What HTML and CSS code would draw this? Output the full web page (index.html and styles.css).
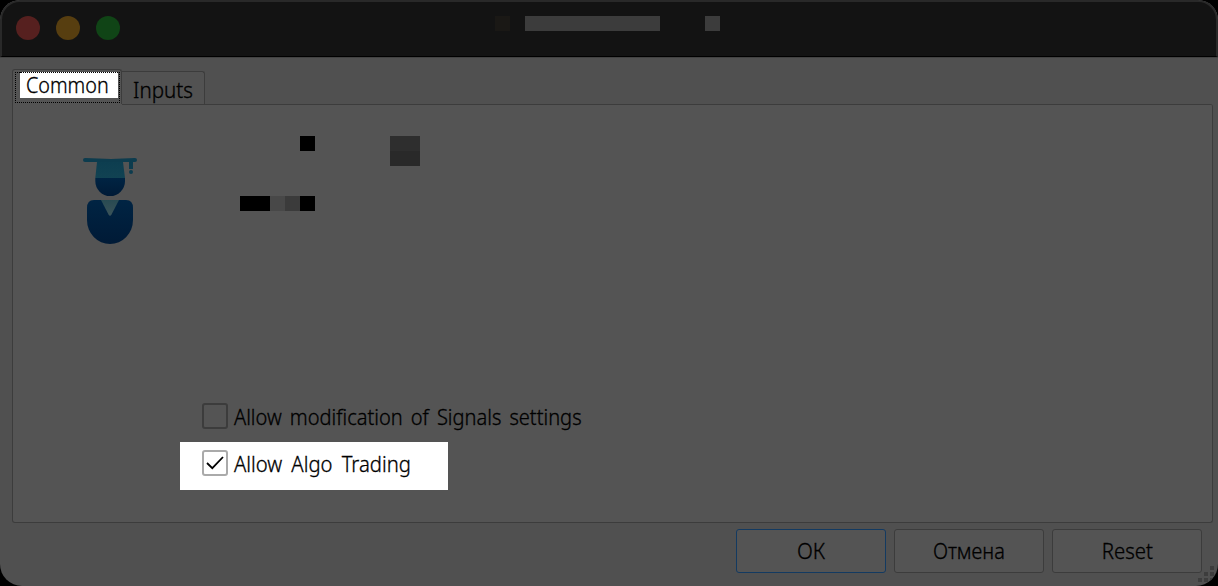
FILE: index.html
```
<!DOCTYPE html>
<html lang="en">
<head>
<meta charset="utf-8">
<title>Expert properties</title>
<link rel="stylesheet" href="styles.css">
</head>
<body>
<main class="window">
  <header class="titlebar">
    <div class="lights"><i class="light red"></i><i class="light yellow"></i><i class="light green"></i></div>
    <div class="title-mask"><i class="m1"></i><i class="m2"></i><i class="m3"></i></div>
  </header>
  <div class="content">
    <nav class="tabs">
      <div class="tab active"><div class="focus"><div class="highlight"><span class="t-common">Common</span></div></div></div>
      <div class="tab"><span class="t-inputs">Inputs</span></div>
    </nav>
    <section class="panel">
      <div class="info">
        <svg class="expert" width="56" height="88" viewBox="0 0 56 88">
          <defs>
            <linearGradient id="cap" x1="0" y1="0" x2="0" y2="1"><stop offset="0" stop-color="#0d3e50"/><stop offset="1" stop-color="#114252"/></linearGradient>
            <linearGradient id="body" x1="0" y1="0" x2="0" y2="1"><stop offset="0" stop-color="#002443"/><stop offset="1" stop-color="#001a36"/></linearGradient>
            <linearGradient id="collar" x1="0" y1="0" x2="0" y2="1"><stop offset="0" stop-color="#284a52"/><stop offset="1" stop-color="#3b5359"/></linearGradient>
          </defs>
          <path d="M12.3 21H42V24A14.8 15 0 0 1 12.3 24Z" fill="url(#body)"/>
          <path d="M14 5H40L42 21H12.3Z" fill="url(#cap)"/>
          <path d="M2 1L28 2L52 1Q54 1 54 3Q54 5 52 5H2Q0 5 0 3Q0 1 2 1Z" fill="#0d3c4e"/>
          <path d="M46 5H50V12H46Z" fill="#0d3c4e"/><circle cx="48" cy="15" r="2" fill="#0d3c4e"/>
          <path d="M11 43H43Q50 43 50 51V63A23 24 0 0 1 4 63V51Q4 43 11 43Z" fill="url(#body)"/>
          <path d="M18 43H36L28.5 57.5Q27 60 25.5 57.5Z" fill="url(#collar)"/>
        </svg>
        <svg class="mask" width="180" height="75" viewBox="0 0 180 75" shape-rendering="crispEdges">
          <path d="M60 0h15v15H60zM0 60h30v15H0zM60 60h15v15H60z" fill="#000"/>
          <path d="M30 60h15v15H30z" fill="#484848"/><path d="M45 60h15v15H45z" fill="#3b3b3b"/>
          <path d="M150 0h30v15h-30z" fill="#2e2e2e"/><path d="M150 15h30v15h-30z" fill="#292929"/>
        </svg>
      </div>
      <div class="options">
        <label class="option"><span class="box"></span><span class="t-signals">Allow modification of Signals settings</span></label>
        <label class="option lit"><span class="box"><svg width="22" height="22" viewBox="0 0 22 22"><path d="M3 11L8.3 16.2L19 5" fill="none" stroke="#000" stroke-width="1.8"/></svg></span><span class="t-algo">Allow Algo Trading</span></label>
      </div>
    </section>
    <footer class="buttons">
      <button class="button primary"><span class="t-ok">ОК</span></button>
      <button class="button"><span class="t-cancel">Отмена</span></button>
      <button class="button"><span class="t-reset">Reset</span></button>
    </footer>
  </div>
  <svg class="grip" width="16" height="16" viewBox="0 0 16 16" shape-rendering="crispEdges"><path d="M12 0h4v4h-4zM6 6h4v4H6zM12 6h4v4h-4zM0 12h4v4H0zM6 12h4v4H6zM12 12h4v4h-4z" fill="#3d3d3d"/></svg>
</main>
</body>
</html>
```

FILE: styles.css
```
* { box-sizing: border-box; }
body { margin: 0; background: #000; overflow: hidden; color: #000; font: 300 21px/24px "Noto Sans", sans-serif; -webkit-text-stroke: .3px #000; }
.window { position: relative; width: 1218px; height: 586px; border-radius: 20px 20px 22px 22px; overflow: hidden; background: #505050; }
.titlebar { height: 57px; display: flex; background: #131313; border: 2px solid #292929; border-bottom: 1px solid #000; border-radius: 20px 20px 0 0; padding: 14px 0 0 14px; }
.lights { display: flex; gap: 16px; width: 479px; }
.light { width: 24px; height: 24px; border-radius: 50%; }
.red { background: #56201f; }
.yellow { background: #573e10; }
.green { background: #104416; }
.title-mask { display: flex; }
.title-mask i { width: 15px; height: 15px; background: #3c3c3c; }
.title-mask .m1 { background: #1a1815; margin-right: 15px; }
.title-mask .m2 { width: 135px; margin-right: 45px; }
.content { padding: 11px 5px 0 12px; border-top: 1px solid #424242; height: 529px; }
.tabs { display: flex; align-items: flex-end; height: 35px; }
.tab { width: 83px; height: 33px; border: 1px solid #3c3c3c; border-left: 0; border-bottom: 0; border-radius: 0 3px 0 0; padding: 6px 0 0 11px; background: #525252; white-space: nowrap; }
.tab.active { width: 110px; height: 35px; border: 1px solid #3c3c3c; border-bottom: 0; border-radius: 3px 3px 0 0; padding: 2px; background: #545454; }
.focus { width: 105px; height: 31px; border: 1px dotted #000; }
.highlight { width: 98px; height: 26px; margin: -1px 0 0 4px; background: #fff; border-top: 1px dotted #000; padding-left: 6px; }
.panel { height: 419px; width: 1201px; border: 1px solid #3c3c3c; border-top: 0; border-radius: 0 3px 3px 3px; background: linear-gradient(#3c3c3c, #3c3c3c) 109px 0 / 1100px 1px no-repeat #545454; }
.info { display: flex; height: 290px; padding: 32px 0 0 70px; }
.expert { margin-top: 21px; margin-right: 101px; }
.options { padding-left: 167px; }
.option { display: flex; align-items: center; gap: 6px; width: 268px; height: 48px; padding: 0 0 4px 22px; white-space: nowrap; }
.option.lit { background: #fff; padding-bottom: 6px; }
.box { width: 26px; height: 26px; border: 2px solid #3c3c3c; border-radius: 3px; flex: none; }
.lit .box { border-color: #aaa; }
.box svg { display: block; }
.buttons { display: flex; gap: 8px; padding: 6px 0 0 724px; }
.button { width: 150px; height: 44px; padding: 0; border: 1px solid #3c3c3c; border-radius: 3px; background: #545454; color: #000; font: inherit; display: flex; justify-content: center; align-items: center; }
.button.primary { border-color: #133a61; }
.grip { position: absolute; right: 4px; bottom: 4px; }
.window span:not(.box) { display: block; transform-origin: 0 50%; }
.window .t-common { transform: scaleX(.94); }
.window .t-inputs { transform: scaleX(.98); }
.window .t-signals { transform: translateY(1px) scaleX(.955); word-spacing: 3px; }
.window .t-algo { transform: translateY(1px) scaleX(.965); word-spacing: 4px; }
.window .button span { transform-origin: 50% 50%; }
.window .t-cancel { transform: scaleX(.95); }
.window .t-reset { transform: scaleX(.97); }
```
